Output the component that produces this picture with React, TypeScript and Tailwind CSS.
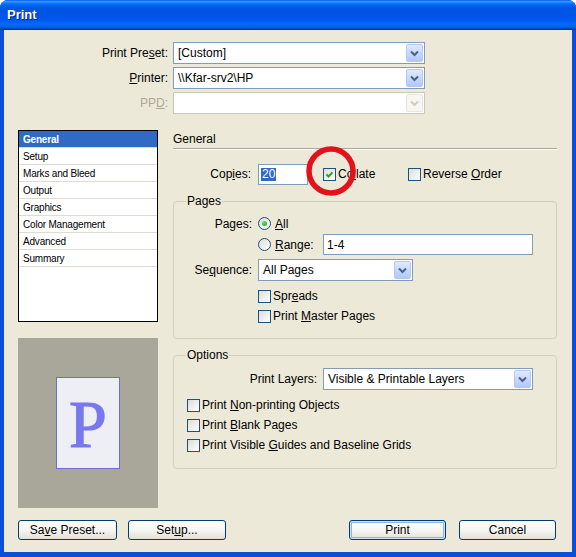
import React from "react";

function Chevron({ disabled }: { disabled?: boolean }) {
  return (
    <svg width="9" height="7" viewBox="0 0 9 7">
      <path
        d="M1 1.5l3.5 3.5L8 1.5"
        fill="none"
        stroke={disabled ? "#CFCDC2" : "#4D6185"}
        strokeWidth="2"
      />
    </svg>
  );
}

function Select({
  value,
  className = "",
  disabled,
}: {
  value?: string;
  className?: string;
  disabled?: boolean;
}) {
  return (
    <div
      className={`flex h-[22px] items-stretch border bg-white p-px ${
        disabled ? "border-[#C9C7BA]" : "border-[#7F9DB9]"
      } ${className}`}
    >
      <div className="flex flex-1 items-center pl-[3px]">{value}</div>
      <div
        className={`flex w-[17px] items-center justify-center rounded-[2px] border ${
          disabled
            ? "border-[#E8E6DD] bg-[#F7F6F2]"
            : "border-[#B4C8F5] bg-[linear-gradient(to_bottom,#E0EAFF,#C2D5FC_60%,#B0C8FA)]"
        }`}
      >
        <Chevron disabled={disabled} />
      </div>
    </div>
  );
}

function Check({ checked, label }: { checked?: boolean; label: React.ReactNode }) {
  return (
    <div className="flex items-center gap-[2px]">
      <span className="flex h-[13px] w-[13px] shrink-0 items-center justify-center border border-[#1C5180] bg-[linear-gradient(135deg,#DCDCD7,#FFFFFF)]">
        {checked && (
          <svg width="9" height="9" viewBox="0 0 9 9">
            <path d="M1.5 4.3l2 2.2 4-4.2" fill="none" stroke="#21A121" strokeWidth="1.9" />
          </svg>
        )}
      </span>
      <span>{label}</span>
    </div>
  );
}

function Radio({ checked, label }: { checked?: boolean; label: React.ReactNode }) {
  return (
    <div className="flex items-center gap-[4px]">
      <span className="flex h-[13px] w-[13px] shrink-0 items-center justify-center rounded-full border border-[#1C5180] bg-[linear-gradient(135deg,#DCDCD7,#FFFFFF)]">
        {checked && (
          <span className="h-[5px] w-[5px] rounded-full bg-[radial-gradient(circle_at_35%_35%,#6BE06B,#139A13)]" />
        )}
      </span>
      <span>{label}</span>
    </div>
  );
}

function Button({
  children,
  className = "",
  primary,
}: {
  children: React.ReactNode;
  className?: string;
  primary?: boolean;
}) {
  return (
    <div
      className={`flex h-[20px] items-center justify-center rounded-[3px] border border-[#003C74] bg-[linear-gradient(to_bottom,#FFFFFF,#F4F4F0_55%,#E2E0D6)] ${
        primary ? "shadow-[inset_0_0_0_1px_#CFE3FC,inset_0_0_0_2px_#8BB3EE]" : ""
      } ${className}`}
    >
      {children}
    </div>
  );
}

function Group({ title, children }: { title: string; children: React.ReactNode }) {
  return (
    <fieldset className="rounded-[4px] border border-[#D0D0BF]">
      <legend className="ml-[12px] px-[1px] leading-[14px]">{title}</legend>
      {children}
    </fieldset>
  );
}

const sections = [
  "General",
  "Setup",
  "Marks and Bleed",
  "Output",
  "Graphics",
  "Color Management",
  "Advanced",
  "Summary",
];

export default function App() {
  return (
    <div className="relative flex h-[557px] w-[576px] flex-col overflow-hidden rounded-t-[8px] bg-[#0B4FD8] font-['Liberation_Sans',Tahoma,Arial,sans-serif] text-[12px] text-black">
      {/* title bar */}
      <div className="flex h-[30px] shrink-0 items-center bg-[linear-gradient(to_bottom,#0058EE_0%,#3593FF_5%,#1A85FF_9%,#036FFC_13%,#0262EE_18%,#0057E5_26%,#0054E3_40%,#0055EB_60%,#005BF5_70%,#026AFE_80%,#0062EF_88%,#0052D6_94%,#0040AB_97%,#003092_100%)] pl-[7px] text-[13px] font-bold text-white [text-shadow:1px_1px_0_#0A1E6E]">
        Print
      </div>

      <div className="mx-[4px] mb-[5px] flex flex-1 flex-col bg-[#ECE9D8] pl-[14px] pr-[15px] pt-[12px]">
        {/* preset / printer / ppd */}
        <div className="flex flex-col gap-[3px]">
          <div className="flex items-center">
            <div className="w-[155px] pr-[5px] text-right">
              Print Pre<u>s</u>et:
            </div>
            <Select value="[Custom]" className="w-[252px]" />
          </div>
          <div className="flex items-center">
            <div className="w-[155px] pr-[5px] text-right">
              <u>P</u>rinter:
            </div>
            <Select value="\\Kfar-srv2\HP" className="w-[252px]" />
          </div>
          <div className="flex items-center">
            <div className="w-[155px] pr-[5px] text-right text-[#ACA899]">
              PP<u>D</u>:
            </div>
            <Select disabled className="w-[252px]" />
          </div>
        </div>

        <div className="mt-[16px] flex gap-[15px]">
          {/* left column */}
          <div className="flex w-[140px] flex-col">
            <div className="h-[192px] border border-black bg-white text-[10px] tracking-[-0.2px]">
              {sections.map((s, i) => (
                <div
                  key={s}
                  className={`flex h-[17px] items-center border-b border-[#DEDBD0] pl-[4px] ${
                    i === 0 ? "bg-[#316AC5] font-bold text-white" : ""
                  }`}
                >
                  {s}
                </div>
              ))}
            </div>
            <div className="mt-[16px] flex h-[170px] items-center justify-center bg-[#A9A799]">
              <div className="flex h-[92px] w-[64px] items-center justify-center border border-[#6E6ED2] bg-[#EEEEF5] pt-[2px] font-['Liberation_Serif',serif] text-[68px] leading-none text-[#7878F0] [-webkit-text-stroke:1.2px_#7878F0]">
                P
              </div>
            </div>
          </div>

          {/* right column */}
          <div className="flex w-[384px] flex-col">
            <div className="flex h-[19px] items-center border-b border-[#ACA899] shadow-[0_1px_0_#FFFFFF]">
              General
            </div>

            <div className="mt-[14px] flex h-[22px] items-center">
              <div className="w-[79px] pr-px text-right">
                Cop<u>i</u>es:
              </div>
              <div className="ml-[6px] flex h-[21px] w-[50px] items-center border border-[#7F9DB9] bg-white pl-[2px]">
                <span className="bg-[#316AC5] px-px leading-[13px] text-white">20</span>
              </div>
              <div className="ml-[15px] w-[85px]">
                <Check checked label={<>Co<u>l</u>late</>} />
              </div>
              <Check label={<>Reverse <u>O</u>rder</>} />
            </div>

            <div className="mt-[9px]">
              <Group title="Pages">
                <div className="pb-[12px] pt-[5px]">
                  <div className="flex h-[21px] items-center">
                    <div className="w-[78px] text-right">Pages:</div>
                    <div className="ml-[6px]">
                      <Radio checked label={<><u>A</u>ll</>} />
                    </div>
                  </div>
                  <div className="flex h-[21px] items-center">
                    <div className="w-[84px]" />
                    <div className="w-[65px]">
                      <Radio label={<><u>R</u>ange:</>} />
                    </div>
                    <div className="flex h-[21px] w-[210px] items-center border border-[#7F9DB9] bg-white pl-[3px]">
                      1-4
                    </div>
                  </div>
                  <div className="mt-[4px] flex items-center">
                    <div className="w-[78px] text-right">
                      Se<u>q</u>uence:
                    </div>
                    <Select value="All Pages" className="ml-[6px] w-[155px]" />
                  </div>
                  <div className="mt-[5px] flex h-[20px] items-center pl-[84px]">
                    <Check label={<>Spr<u>e</u>ads</>} />
                  </div>
                  <div className="flex h-[20px] items-center pl-[84px]">
                    <Check label={<>Print <u>M</u>aster Pages</>} />
                  </div>
                </div>
              </Group>
            </div>

            <div className="mt-[9px]">
              <Group title="Options">
                <div className="pb-[13px] pt-[6px]">
                  <div className="flex items-center">
                    <div className="w-[143px] text-right">Print Layers:</div>
                    <Select value="Visible & Printable Layers" className="ml-[6px] w-[210px]" />
                  </div>
                  <div className="mt-[5px] pl-[13px]">
                    <div className="flex h-[20px] items-center">
                      <Check label={<>Print <u>N</u>on-printing Objects</>} />
                    </div>
                    <div className="flex h-[20px] items-center">
                      <Check label={<>Print <u>B</u>lank Pages</>} />
                    </div>
                    <div className="flex h-[20px] items-center">
                      <Check label={<>Print Visible <u>G</u>uides and Baseline Grids</>} />
                    </div>
                  </div>
                </div>
              </Group>
            </div>
          </div>
        </div>

        {/* buttons */}
        <div className="mt-[12px] flex items-center pr-px">
          <Button className="w-[99px]">
            Sa<u>v</u>e Preset...
          </Button>
          <Button className="ml-[11px] w-[98px]">
            Set<u>u</u>p...
          </Button>
          <Button primary className="ml-auto w-[97px]">
            Print
          </Button>
          <Button className="ml-[13px] w-[97px]">Cancel</Button>
        </div>
      </div>

      {/* red annotation circle */}
      <svg
        className="pointer-events-none absolute left-[304px] top-[144px]"
        width="54"
        height="54"
        viewBox="0 0 54 54"
      >
        <circle cx="27" cy="27" r="22" fill="none" stroke="#E3121A" strokeWidth="5.5" />
      </svg>
    </div>
  );
}
